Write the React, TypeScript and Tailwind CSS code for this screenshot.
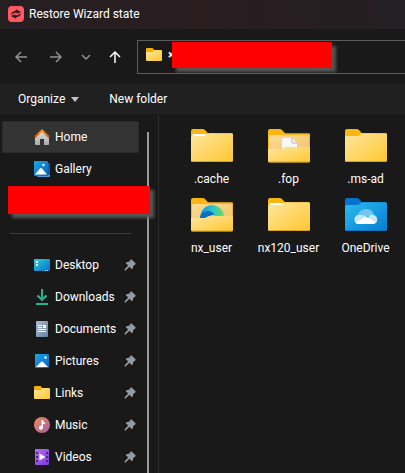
import type { ReactNode } from "react";

type FolderKind = "paper" | "plain" | "document" | "edge" | "onedrive";

const FOLDERS: { name: string; kind: FolderKind }[] = [
  { name: ".cache", kind: "paper" },
  { name: ".fop", kind: "document" },
  { name: ".ms-ad", kind: "plain" },
  { name: "nx_user", kind: "edge" },
  { name: "nx120_user", kind: "paper" },
  { name: "OneDrive", kind: "onedrive" },
];

// One set of gradients for all icons, referenced by id.
function Gradients() {
  return (
    <svg className="absolute size-0" aria-hidden="true">
      <defs>
        <linearGradient id="folder" x1="0" y1="0" x2="1" y2="1">
          <stop stopColor="#ffe7a0" />
          <stop offset="1" stopColor="#ffc72f" />
        </linearGradient>
        <linearGradient id="back" x1="0" y1="0" x2="1" y2="1">
          <stop stopColor="#ffdc91" />
          <stop offset="1" stopColor="#edc170" />
        </linearGradient>
        <linearGradient id="cloud" x1="0" y1="0" x2="1" y2="1">
          <stop stopColor="#29bdf0" />
          <stop offset="1" stopColor="#087bd2" />
        </linearGradient>
        <linearGradient id="edge" x1="0" y1="0" x2="1" y2="0">
          <stop stopColor="#168cd8" />
          <stop offset="0.5" stopColor="#2cc3d5" />
          <stop offset="1" stopColor="#64df57" />
        </linearGradient>
        <linearGradient id="photo" x1="0" y1="0" x2="1" y2="1">
          <stop stopColor="#20a4e8" />
          <stop offset="1" stopColor="#0864b6" />
        </linearGradient>
        <linearGradient id="screen" x1="0" y1="0" x2="1" y2="1">
          <stop stopColor="#2bd0e0" />
          <stop offset="1" stopColor="#086fc5" />
        </linearGradient>
        <linearGradient id="wall" x1="0" y1="0" x2="0" y2="1">
          <stop stopColor="#e2e2e2" />
          <stop offset="1" stopColor="#a9a9a9" />
        </linearGradient>
        <linearGradient id="roof" x1="0" y1="0" x2="0" y2="1">
          <stop stopColor="#ff9a24" />
          <stop offset="1" stopColor="#cd4a0a" />
        </linearGradient>
        <linearGradient id="arrow" x1="0" y1="0" x2="0" y2="1">
          <stop stopColor="#2cc68c" />
          <stop offset="1" stopColor="#15a794" />
        </linearGradient>
        <linearGradient id="sheet" x1="0" y1="0" x2="1" y2="1">
          <stop stopColor="#a9bdd3" />
          <stop offset="1" stopColor="#6681a2" />
        </linearGradient>
        <linearGradient id="disc" x1="0" y1="0" x2="1" y2="1">
          <stop stopColor="#f58c55" />
          <stop offset="1" stopColor="#a25ba8" />
        </linearGradient>
        <linearGradient id="film" x1="0" y1="0" x2="1" y2="1">
          <stop stopColor="#b770f5" />
          <stop offset="1" stopColor="#7b3bd6" />
        </linearGradient>
      </defs>
    </svg>
  );
}

function SmallIcon({ children }: { children: ReactNode }) {
  return (
    <svg className="size-4 shrink-0" viewBox="0 0 16 16" fill="none" aria-hidden="true">
      {children}
    </svg>
  );
}

const homeIcon = (
  <SmallIcon>
    <path d="M1 7.5 8 1.5l7 6V15a1 1 0 0 1-1 1h-4v-6H6v6H2a1 1 0 0 1-1-1Z" fill="url(#wall)" />
    <path d="m.7 8.2 7.3-6.800 7.3 6.800" stroke="url(#roof)" strokeWidth="2" strokeLinejoin="round" />
  </SmallIcon>
);

const galleryIcon = (
  <SmallIcon>
    <path d="M3 14h11V3h1a1 1 0 0 1 1 1v11a1 1 0 0 1-1 1H4a1 1 0 0 1-1-1Z" fill="#4f9bdd" />
    <path d="M14 2h1a1 1 0 0 1 1 1v11h-2Z" fill="#075fae" />
    <rect width="14" height="15" rx="1" fill="url(#photo)" />
    <path d="m1 13.5 5-6q1-1 2 0l5 6Z" fill="#fff" />
    <circle cx="9.500" cy="4" r="1.2" fill="#fff" />
  </SmallIcon>
);

const desktopIcon = (
  <SmallIcon>
    <rect y="2" width="16" height="12" rx="1" fill="url(#screen)" />
    <path d="M2 4h2v2H2zM2 7h2v2H2z" fill="#fff" />
    <path d="M11 13h1v1h-1zM13 13h1v1h-1z" fill="#c6e8ff" />
  </SmallIcon>
);

const downloadsIcon = (
  <SmallIcon>
    <path d="M3.5 6.500 8 11l4.500-4.500" stroke="url(#arrow)" strokeWidth="2" />
    <path d="M2 14h12v2H2zM7 0h2v11H7z" fill="#20b58d" />
  </SmallIcon>
);

const documentsIcon = (
  <SmallIcon>
    <rect x="2" width="12" height="16" rx="1" fill="url(#sheet)" />
    <path d="M4 4h4v1H4zM4 6h4v1H4zM4 8h8v1H4zM4 10h8v1H4zM9 4h3v3H9z" fill="#fff" />
  </SmallIcon>
);

const picturesIcon = (
  <SmallIcon>
    <rect x="1" y="1" width="14" height="14" rx="1" fill="url(#photo)" />
    <path d="m2 14 5-5q1-1 2 0l5 5Z" fill="#fff" />
    <circle cx="11.500" cy="4.500" r="1.2" fill="#fff" />
  </SmallIcon>
);

const folderIcon = (
  <SmallIcon>
    <path d="M0 2a1 1 0 0 1 1-1h5.500L8.500 3H15v6H0Z" fill="#f5ad0b" />
    <path d="M0 5h6.500l2-2H15a1 1 0 0 1 1 1v9a1 1 0 0 1-1 1H1a1 1 0 0 1-1-1Z" fill="url(#folder)" />
  </SmallIcon>
);

const musicIcon = (
  <SmallIcon>
    <circle cx="8" cy="8" r="8" fill="url(#disc)" />
    <circle cx="6.800" cy="10.800" r="2" fill="#fff" />
    <path d="M7.500 3H9q0 2 2 2.500v1.700q-1.200 0-2-.7V11H7.500Z" fill="#fff" />
  </SmallIcon>
);

const videosIcon = (
  <SmallIcon>
    <rect x="1" width="14" height="16" rx="1" fill="url(#film)" />
    <path d="M2 3h2v2H2zM2 7h2v2H2zM2 11h2v2H2zM12 3h2v2h-2zM12 7h2v2h-2zM12 11h2v2h-2z" fill="#4b2386" />
    <path d="m5.500 4.500 6 3.500-6 3.500Z" fill="#fff" />
  </SmallIcon>
);

const PINNED = [
  { name: "Desktop", icon: desktopIcon },
  { name: "Downloads", icon: downloadsIcon },
  { name: "Documents", icon: documentsIcon },
  { name: "Pictures", icon: picturesIcon },
  { name: "Links", icon: folderIcon },
  { name: "Music", icon: musicIcon },
  { name: "Videos", icon: videosIcon },
];

function PinIcon() {
  return (
    <svg className="size-3 shrink-0" viewBox="0 0 12 12" fill="#929ba1" aria-hidden="true">
      <path d="M6.500.8q.7-.8 1.400-.1l3.400 3.400q.7.7-.1 1.400L9.300 6.900 8.700 9.600q-.3 1-1.100.3L5.500 7.800 1.700 11.400H.6v-1.100l3.600-3.800-2.100-2.100q-.7-.8.3-1.100l2.700-.6Z" />
    </svg>
  );
}

function FolderIcon({ kind }: { kind: FolderKind }) {
  const blue = kind === "onedrive";
  const open = kind === "document" || kind === "edge";
  return (
    <svg className="h-[34px] w-[42px]" viewBox="0 0 42 34" fill="none" aria-hidden="true">
      <path
        d="M0 2a2 2 0 0 1 2-2h9.500q1.500 0 2.500 1l3 3.300h23.500A1.500 1.500 0 0 1 42 6v20H0Z"
        fill={blue ? "#0873ce" : "#fbb613"}
      />
      {open ? (
        <>
          <path d="M1 7q0-1 1-1h38q1 0 1 1v20H1Z" fill="url(#back)" />
          {kind === "document" ? (
            <>
              <path d="M14 9h10l5 5v14H14Z" fill="#f7f7f7" />
              <path d="M24 9v5h5" stroke="#b9b9b9" />
            </>
          ) : (
            <>
              <path d="M9 21C9 12 15 7 21 7s12 5 12 12v4H9Z" fill="url(#edge)" />
              <path d="M9 21c0-5 4-8 8-8 3 0 6 2 6 4-4 0-6 2-7 5H9Z" fill="#0871c4" />
              <path d="M18 22q0-4 3-5 3 0 3 3v2Z" fill="#e9d69b" />
            </>
          )}
          <path
            d="M0 20h14l4-2h24v14a1.500 1.500 0 0 1-1.500 1.500h-39A1.500 1.500 0 0 1 0 32Z"
            fill="url(#folder)"
          />
          <path d="M1 33h40" stroke="#c98e12" strokeOpacity=".7" />
        </>
      ) : (
        <>
          {kind === "paper" && <path d="M1.500 5h15L14 8H1.500Z" fill="#fff" />}
          <path
            d="M0 8.500Q0 7 1.500 7H12q1.500 0 2.500-.8l1.500-1.200q1-.7 2-.7h22.500Q42 4.300 42 6v25.500q0 1.500-1.500 1.500h-39Q0 33 0 31.500Z"
            fill={blue ? "url(#cloud)" : "url(#folder)"}
          />
          <path d="M1 32.500h40" stroke={blue ? "#0870b9" : "#c98e12"} strokeOpacity=".7" />
        </>
      )}
      {blue && (
        <>
          <path d="M13 21c-2-4 2-10 8-10 4 0 7 2 8 6Z" fill="#72c7ee" />
          <path d="M13 26c-5-1-5-9 1-9 4-.5 7 1 9 3 1-3 3-4 5-3 5 0 6 8 1 9Z" fill="#c3e8fa" />
          <path d="m10.500 24.500 9-5q1.500-.8 3 0l8 4.500q-1 2-3 2H13q-1.500 0-2.500-1.500Z" fill="#fff" />
        </>
      )}
    </svg>
  );
}

function NavArrow({ label, d, className }: { label: string; d: string; className: string }) {
  return (
    <button aria-label={label} className={className}>
      <svg className="size-3" viewBox="0 0 12 12" fill="none" stroke="currentColor" strokeWidth="1.5" aria-hidden="true">
        <path d={d} />
      </svg>
    </button>
  );
}

function Sidebar() {
  return (
    <nav className="relative w-[158px] shrink-0 pt-[7px] pl-[2px]">
      <a
        href="#home"
        className="flex h-8 w-[137px] items-center gap-[5px] rounded-xs border border-[#2b2b2b] bg-[#333333] pl-[31px]"
      >
        {homeIcon}
        Home
      </a>
      <a href="#gallery" className="flex h-8 items-center gap-[5px] pl-8">
        {galleryIcon}
        Gallery
      </a>
      <div className="relative z-10 ml-[6px] mt-px h-7 w-[142px] bg-[#ff0000] shadow-[4px_4px_3px_#555555]" />
      <hr className="mt-[19px] mb-[15px] ml-2 w-[121px] border-[#3b3b3b]" />
      {PINNED.map((item) => (
        <a
          key={item.name}
          href={`#${item.name}`}
          className="flex h-8 w-[134px] items-center gap-[5px] pl-8"
        >
          {item.icon}
          <span className="grow">{item.name}</span>
          <PinIcon />
        </a>
      ))}
      <div className="absolute top-[18px] bottom-0 left-[147px] w-[2px] bg-[#9b9b9b]" />
    </nav>
  );
}

export default function App() {
  return (
    <div className="flex h-screen flex-col overflow-hidden bg-[#191919] font-[Roboto,sans-serif] text-xs text-white">
      <Gradients />
      <header className="flex h-[29px] shrink-0 items-center gap-[5px] bg-linear-to-r from-[#251f21] via-[#291d20] to-[#231f22] pb-[2px] pl-2">
        <svg className="size-4" viewBox="0 0 16 16" fill="none" aria-hidden="true">
          <rect width="16" height="16" rx="4" fill="#ff5a62" />
          <path d="M3 9Q3 6 7 5l1.500-1.500L13 6 9 7.800 8.500 6.600Q5 6.800 3 9Z" fill="#35191f" />
          <path d="M13 7q0 3-4 4l-1.500 1.500L3 10l4-1.800.5 1.200Q11 9.200 13 7Z" fill="#35191f" />
        </svg>
        <h1>Restore Wizard state</h1>
      </header>

      <div className="flex h-[55px] shrink-0 items-center pl-[15px]">
        <NavArrow label="Back" className="text-[#929292]" d="M12 6H.8M6 1 1 6l5 5" />
        <NavArrow label="Forward" className="ml-[23px] text-[#929292]" d="M0 6h11.200M6 1l5 5-5 5" />
        <NavArrow label="Recent locations" className="ml-[18px] text-[#929292]" d="m2 4 4 4 4-4" />
        <NavArrow label="Up" className="ml-[17px] text-white" d="M6 12V.8M1 6l5-5 5 5" />
        <div className="ml-4 flex h-[34px] grow items-center border border-r-0 border-[#5c5c5c] pb-1 pl-2">
          {folderIcon}
          <span className="ml-[6px] w-1 font-bold">×</span>
          <div className="relative h-[26px] w-40 bg-[#ff0000] shadow-[4px_4px_3px_#555555]" />
        </div>
      </div>

      <div className="flex h-[30px] shrink-0 items-center gap-[30px] bg-[#202020] pl-[18px]">
        <button className="flex items-center gap-[6px]">
          Organize
          <svg className="h-[5px] w-2" viewBox="0 0 8 5" fill="#c4c4c4" aria-hidden="true">
            <path d="M0 0h8L4 5Z" />
          </svg>
        </button>
        <button>New folder</button>
      </div>

      <div className="flex min-h-0 grow">
        <Sidebar />
        <main className="grow border-l border-[#2b2b2b] pt-[15px] pl-[14px]">
          <ul className="grid grid-cols-[repeat(auto-fill,77px)]">
            {FOLDERS.map((folder) => (
              <li key={folder.name} className="flex h-[69px] flex-col items-center gap-2">
                <FolderIcon kind={folder.kind} />
                <span className="leading-4">{folder.name}</span>
              </li>
            ))}
          </ul>
        </main>
      </div>
    </div>
  );
}
